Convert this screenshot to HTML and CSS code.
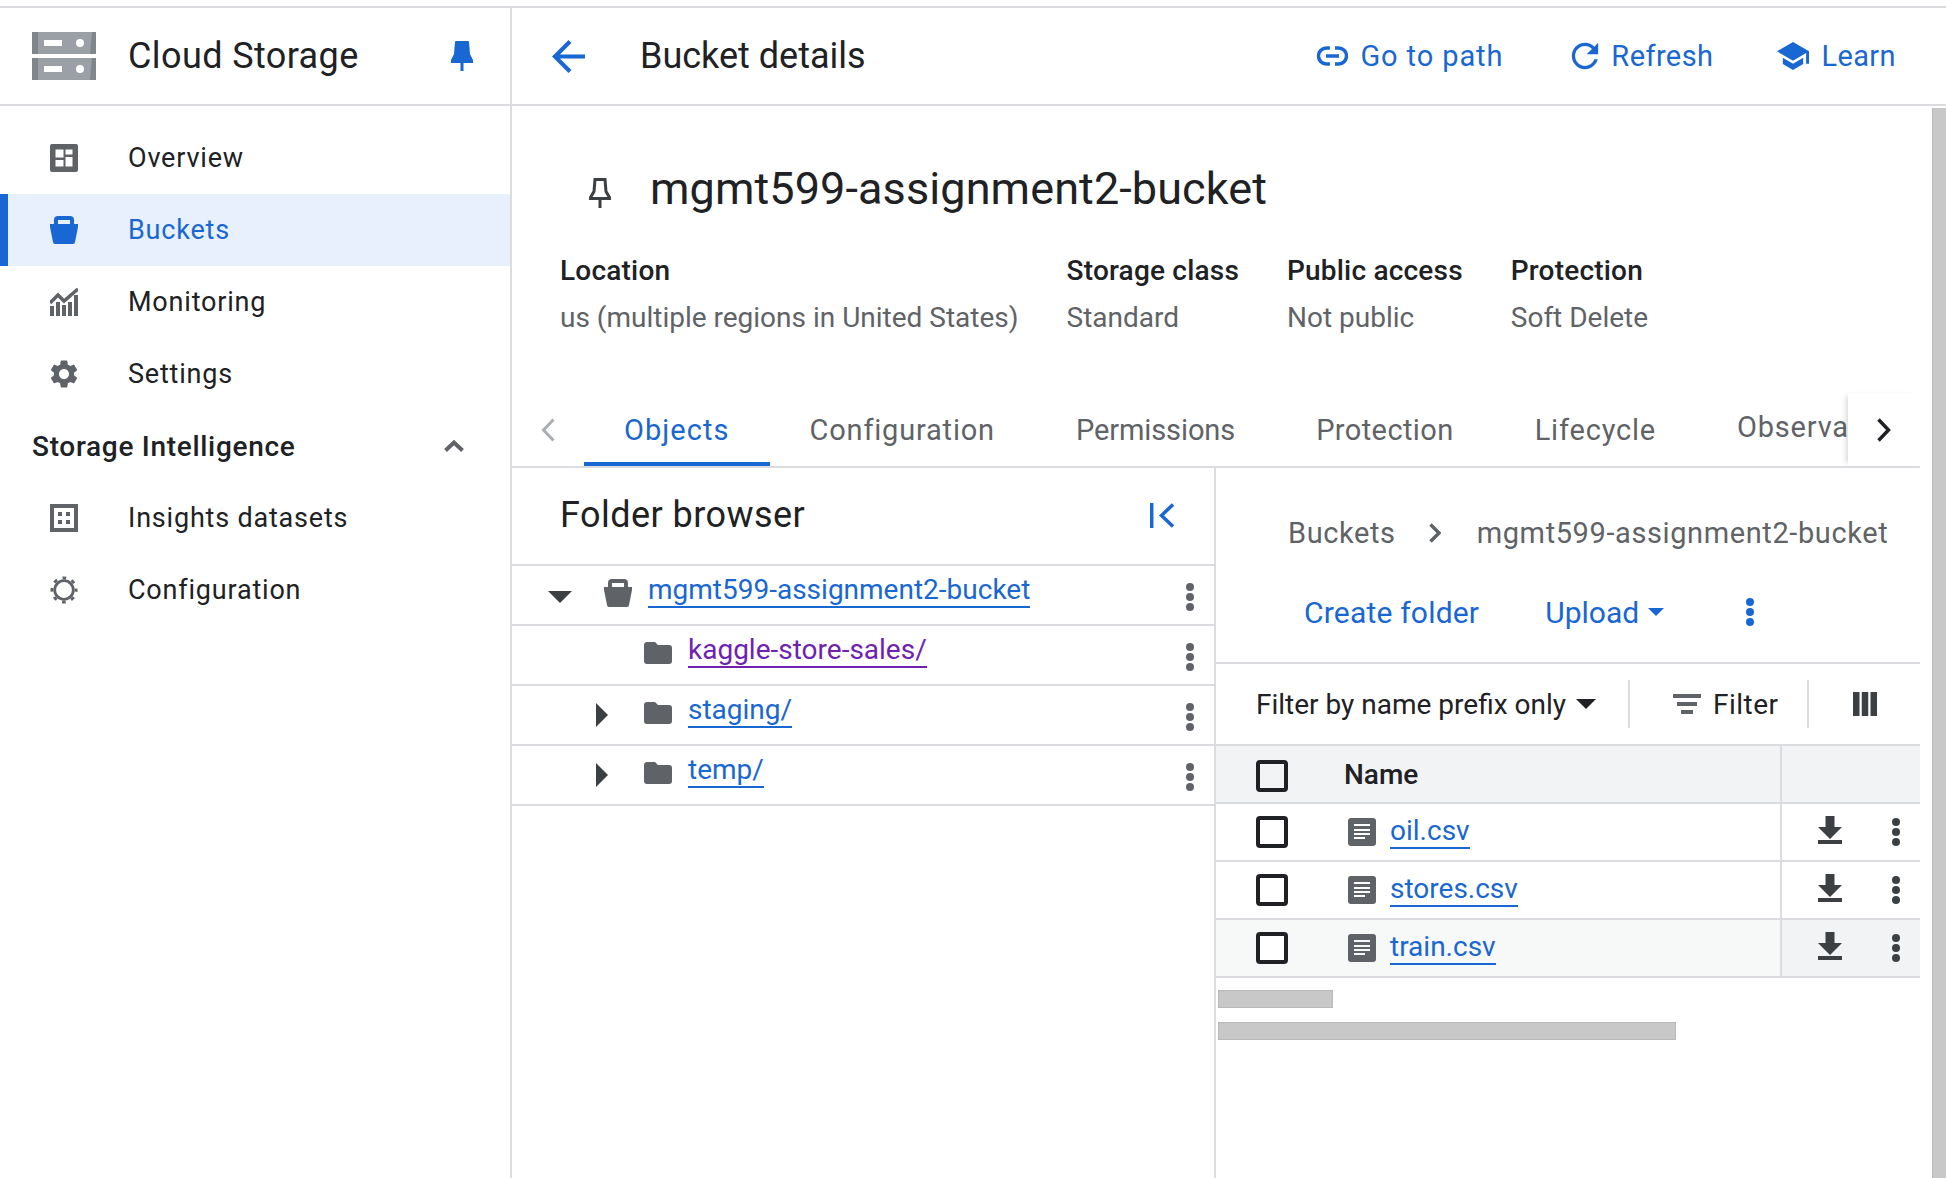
FILE: index.html
```html
<!DOCTYPE html>
<html lang="en">
<head>
    <meta charset="UTF-8">
    <meta name="viewport" content="width=device-width, initial-scale=1.0">
    <title>Bucket details - Cloud Storage</title>
    <link rel="stylesheet" href="styles.css">
</head>
<body>
    <svg class="icon-defs" aria-hidden="true">
        <symbol id="kebab" viewBox="0 0 8 28"><circle cx="4" cy="4" r="4"/><circle cx="4" cy="14" r="4"/><circle cx="4" cy="24" r="4"/></symbol>
        <symbol id="bucket" viewBox="0 0 28 28"><path fill-rule="evenodd" d="M4 8V4a4 4 0 0 1 4-4h12a4 4 0 0 1 4 4v4h4v3l-3 15a2 2 0 0 1-2 2H5a2 2 0 0 1-2-2L0 11V8zM8 4v4h12V4z"/></symbol>
        <symbol id="folder" viewBox="0 0 28 22"><path d="M3 0h8l3 3h11a3 3 0 0 1 3 3v13a3 3 0 0 1-3 3H3a3 3 0 0 1-3-3V3a3 3 0 0 1 3-3z"/></symbol>
        <symbol id="file" viewBox="0 0 28 28"><path fill-rule="evenodd" d="M3 0h22a3 3 0 0 1 3 3v22a3 3 0 0 1-3 3H3a3 3 0 0 1-3-3V3a3 3 0 0 1 3-3zM6 6v2h16V6zM6 11v2h16v-2zM6 15v2h16v-2zM6 19v2h11v-2z"/></symbol>
        <symbol id="download" viewBox="0 0 24 28"><path d="M7.500 0h9v11H24L12 23 0 11h7.500zM0 24h24v4H0z"/></symbol>
        <symbol id="tri-right" viewBox="0 0 12 24"><path d="M0 0l12 12L0 24z"/></symbol>
    </svg>

    <div class="app">
        <aside class="sidebar">
            <header class="side-head">
                <svg class="logo" viewBox="0 0 64 48">
                    <path fill="#9aa0a6" d="M0 0h64v22H0zM0 26h64v22H0z"/>
                    <path fill="#80868b" d="M0 0h6v22H0zM0 26h6v22H0zM64 0v22h-6l2-22zM64 26v22h-6l2-22z"/>
                    <path fill="#fff" d="M12 8h18v6H12zM12 34h18v6H12z"/>
                    <circle fill="#fff" cx="48" cy="11" r="4"/><circle fill="#fff" cx="48" cy="37" r="4"/>
                </svg>
                <span class="side-title">Cloud Storage</span>
                <svg class="side-pin" viewBox="0 0 22 30"><path d="M5 0h12a1 1 0 0 1 1 1l1 12 3 6v3h-9.500v8h-3v-8H0v-3l3-6 1-12a1 1 0 0 1 1-1z"/></svg>
            </header>
            <nav class="side-nav">
                <a class="nav-item">
                    <svg class="nav-icon" viewBox="0 0 28 28"><path fill-rule="evenodd" d="M2 0h24a2 2 0 0 1 2 2v24a2 2 0 0 1-2 2H2a2 2 0 0 1-2-2V2a2 2 0 0 1 2-2zM5.500 5.500v8h8v-8zM5.500 16v6.500h8V16zM15.500 5.500v5h7v-5zM15.500 13v9.500h7V13z"/></svg>
                    Overview
                </a>
                <a class="nav-item active">
                    <svg class="nav-icon"><use href="#bucket"/></svg>
                    Buckets
                </a>
                <a class="nav-item">
                    <svg class="nav-icon" viewBox="0 0 28 28"><path d="M0 18h4v10H0zM6 14h4v14H6zM12 17h4v11h-4zM18 14h4v14h-4zM24 7h4v21h-4z"/><path fill="none" stroke="#5f6368" stroke-width="3.500" d="M0 15l8-8 6 6L28 1"/></svg>
                    Monitoring
                </a>
                <a class="nav-item">
                    <svg class="nav-icon" viewBox="2.600 2 18.800 20"><path d="M19.140 12.940c.04-.3.06-.61.06-.94 0-.32-.02-.64-.07-.94l2.030-1.580a.49.49 0 0 0 .12-.61l-1.920-3.320a.488.488 0 0 0-.59-.22l-2.390.96c-.5-.38-1.030-.7-1.620-.94l-.36-2.540a.484.484 0 0 0-.48-.41h-3.840c-.24 0-.43.17-.47.41l-.36 2.540c-.59.24-1.130.57-1.620.94l-2.390-.96c-.22-.08-.47 0-.59.22L2.740 8.870c-.12.21-.08.47.12.61l2.030 1.580c-.05.3-.09.63-.09.94s.02.64.07.94l-2.030 1.580a.49.49 0 0 0-.12.61l1.920 3.320c.12.22.37.29.59.22l2.390-.96c.5.38 1.030.7 1.620.94l.36 2.540c.05.24.24.41.48.41h3.840c.24 0 .44-.17.47-.41l.36-2.540c.59-.24 1.130-.56 1.620-.94l2.390.96c.22.08.47 0 .59-.22l1.920-3.320c.12-.22.07-.47-.12-.61l-2.010-1.580zM12 15.600c-1.980 0-3.600-1.620-3.600-3.600s1.620-3.600 3.600-3.600 3.600 1.620 3.600 3.600-1.620 3.600-3.600 3.600z"/></svg>
                    Settings
                </a>
                <div class="nav-group">
                    <span>Storage Intelligence</span>
                    <svg class="nav-chevron" viewBox="0 0 20 12"><path fill="none" stroke="#5f6368" stroke-width="4" d="M1.500 10.500L10 2.500l8.500 8"/></svg>
                </div>
                <a class="nav-item">
                    <svg class="nav-icon" viewBox="0 0 28 28"><path fill-rule="evenodd" d="M0 0h28v28H0zM4 4v20h20V4zM8 8h4v4H8zM16 8h4v4h-4zM8 16h4v4H8zM16 16h4v4h-4z"/></svg>
                    Insights datasets
                </a>
                <a class="nav-item">
                    <svg class="nav-icon" viewBox="0 0 30 30"><circle cx="15" cy="15" r="10" fill="none" stroke="#5f6368" stroke-width="3"/><circle cx="15" cy="15" r="13" fill="none" stroke="#5f6368" stroke-width="3" stroke-dasharray="4 6.210" stroke-dashoffset="2"/></svg>
                    Configuration
                </a>
            </nav>
        </aside>

        <main class="main">
            <header class="main-head">
                <svg class="back-arrow" viewBox="4 4 16 16"><path d="M20 11H7.830l5.590-5.590L12 4l-8 8 8 8 1.410-1.410L7.830 13H20v-2z"/></svg>
                <h1 class="main-title">Bucket details</h1>
                <div class="head-actions">
                    <a class="head-action go-path">
                        <svg class="link-icon" viewBox="0 0 31 20"><path fill="none" stroke="#1967d2" stroke-width="3.500" d="M13 2H9.500a8 8 0 0 0 0 16H13M18 2h3.500a8 8 0 0 1 0 16H18M9 10h13"/></svg>
                        Go to path
                    </a>
                    <a class="head-action">
                        <svg class="refresh-icon" viewBox="3.500 3.500 17 17"><path d="M17.650 6.350C16.200 4.900 14.210 4 12 4c-4.420 0-7.990 3.580-7.990 8s3.570 8 7.990 8c3.730 0 6.840-2.550 7.730-6h-2.080c-.82 2.330-3.040 4-5.650 4-3.310 0-6-2.690-6-6s2.690-6 6-6c1.660 0 3.140.69 4.220 1.780L13 11h7V4l-2.350 2.350z"/></svg>
                        Refresh
                    </a>
                    <a class="head-action">
                        <svg class="learn-icon" viewBox="1 3 22 18" preserveAspectRatio="none"><path d="M5 13.180v4L12 21l7-3.820v-4L12 17l-7-3.820zM12 3 1 9l11 6 9-4.910V17h2V9L12 3z"/></svg>
                        Learn
                    </a>
                </div>
            </header>

            <div class="main-body">
                <div class="content">
                    <section class="bucket-head">
                        <div class="bucket-name">
                            <svg class="name-pin" viewBox="0 0 22 30"><path fill="none" stroke="#3c4043" stroke-width="3" d="M6 1.500h10l1 12 3.500 6v1h-19v-1l3.500-6zM11 21v9"/></svg>
                            <h2>mgmt599-assignment2-bucket</h2>
                        </div>
                        <div class="meta">
                            <div class="meta-col"><div class="meta-label">Location</div><div class="meta-value">us (multiple regions in United States)</div></div>
                            <div class="meta-col"><div class="meta-label">Storage class</div><div class="meta-value">Standard</div></div>
                            <div class="meta-col"><div class="meta-label">Public access</div><div class="meta-value">Not public</div></div>
                            <div class="meta-col"><div class="meta-label">Protection</div><div class="meta-value">Soft Delete</div></div>
                        </div>
                    </section>

                    <div class="tabs">
                        <button class="tab-prev"><svg viewBox="0 0 14 24"><path fill="none" stroke="#aaaeb2" stroke-width="3" d="M12.500 1.500L2.500 12l10 10.500"/></svg></button>
                        <div class="tab-list">
                            <a class="tab active">Objects</a>
                            <a class="tab">Configuration</a>
                            <a class="tab tab-tight">Permissions</a>
                            <a class="tab tab-mid">Protection</a>
                            <a class="tab">Lifecycle</a>
                            <a class="tab tab-raised">Observability</a>
                        </div>
                        <button class="tab-next"><svg viewBox="0 0 14 24"><path fill="none" stroke="#202124" stroke-width="3.500" d="M1.500 1.500l10 10.500-10 10.500"/></svg></button>
                    </div>

                    <div class="split">
                        <section class="folders">
                            <div class="folders-head">
                                <h3>Folder browser</h3>
                                <svg class="collapse-icon" viewBox="0 0 24 25"><path fill="none" stroke="#1967d2" stroke-width="3.500" d="M1.700 0v25M23 1.500L11.500 12.500 23 23.500"/></svg>
                            </div>
                            <div class="tree-row root">
                                <svg class="tri-down" viewBox="0 0 24 12"><path d="M0 0h24L12 12z"/></svg>
                                <svg class="tree-bucket"><use href="#bucket"/></svg>
                                <a class="tree-link">mgmt599-assignment2-bucket</a>
                                <svg class="kebab"><use href="#kebab"/></svg>
                            </div>
                            <div class="tree-row">
                                <span class="tri-slot"></span>
                                <svg class="tree-folder"><use href="#folder"/></svg>
                                <a class="tree-link visited">kaggle-store-sales/</a>
                                <svg class="kebab"><use href="#kebab"/></svg>
                            </div>
                            <div class="tree-row">
                                <svg class="tri-slot"><use href="#tri-right"/></svg>
                                <svg class="tree-folder"><use href="#folder"/></svg>
                                <a class="tree-link">staging/</a>
                                <svg class="kebab"><use href="#kebab"/></svg>
                            </div>
                            <div class="tree-row">
                                <svg class="tri-slot"><use href="#tri-right"/></svg>
                                <svg class="tree-folder"><use href="#folder"/></svg>
                                <a class="tree-link">temp/</a>
                                <svg class="kebab"><use href="#kebab"/></svg>
                            </div>
                        </section>

                        <section class="objects">
                            <div class="crumbs">
                                <span>Buckets</span>
                                <svg class="crumb-sep" viewBox="0 0 12 20"><path fill="none" stroke="#5f6368" stroke-width="3.500" d="M1.500 1.500L10 10l-8.500 8.500"/></svg>
                                <span>mgmt599-assignment2-bucket</span>
                            </div>
                            <div class="obj-actions">
                                <a class="obj-action">Create folder</a>
                                <a class="obj-action upload">Upload<svg class="caret-blue" viewBox="0 0 16 8"><path d="M0 0h16L8 8z"/></svg></a>
                                <svg class="kebab-blue"><use href="#kebab"/></svg>
                            </div>
                            <div class="filter-bar">
                                <span class="filter-mode">Filter by name prefix only</span>
                                <svg class="caret-dark" viewBox="0 0 20 10"><path d="M0 0h20L10 10z"/></svg>
                                <span class="bar-sep"></span>
                                <svg class="filter-icon" viewBox="0 0 28 20"><path d="M0 0h28v4H0zM4 8h20v4H4zM8 16h12v4H8z"/></svg>
                                <span class="filter-label">Filter</span>
                                <span class="bar-sep second"></span>
                                <svg class="columns-icon" viewBox="0 0 24 24"><path d="M0 0h6.500v24H0zM8.750 0h6.500v24h-6.500zM17.500 0H24v24h-6.500z"/></svg>
                            </div>

                            <div class="obj-table">
                                <div class="t-row t-head">
                                    <div class="t-main">
                                        <span class="check head-check"></span>
                                        <span class="t-name">Name</span>
                                    </div>
                                    <div class="t-act"></div>
                                </div>
                                <div class="t-row">
                                    <div class="t-main">
                                        <span class="check"></span>
                                        <svg class="file-icon"><use href="#file"/></svg>
                                        <a class="file-link">oil.csv</a>
                                    </div>
                                    <div class="t-act">
                                        <svg class="dl-icon"><use href="#download"/></svg>
                                        <svg class="kebab-dark"><use href="#kebab"/></svg>
                                    </div>
                                </div>
                                <div class="t-row">
                                    <div class="t-main">
                                        <span class="check"></span>
                                        <svg class="file-icon"><use href="#file"/></svg>
                                        <a class="file-link">stores.csv</a>
                                    </div>
                                    <div class="t-act">
                                        <svg class="dl-icon"><use href="#download"/></svg>
                                        <svg class="kebab-dark"><use href="#kebab"/></svg>
                                    </div>
                                </div>
                                <div class="t-row hover">
                                    <div class="t-main">
                                        <span class="check"></span>
                                        <svg class="file-icon"><use href="#file"/></svg>
                                        <a class="file-link">train.csv</a>
                                    </div>
                                    <div class="t-act">
                                        <svg class="dl-icon"><use href="#download"/></svg>
                                        <svg class="kebab-dark"><use href="#kebab"/></svg>
                                    </div>
                                </div>
                            </div>

                            <div class="skeleton short"></div>
                            <div class="skeleton long"></div>
                        </section>
                    </div>
                </div>
                <div class="scrollbar"></div>
            </div>
        </main>
    </div>
</body>
</html>
```

FILE: styles.css
```css
html, body {
    margin: 0;
    height: 100%;
    overflow: hidden;
    background-color: #fff;
}

body {
    font-family: "Roboto", "Liberation Sans", sans-serif;
    color: #202124;
    font-size: 28px;
}

h1, h2, h3 {
    margin: 0;
    font-weight: 400;
}

svg {
    display: block;
    flex: none;
}

.icon-defs {
    display: none;
}

.app {
    display: flex;
    margin-top: 6px;
    height: 1172px;
    border-top: 2px solid #dadce0;
    box-sizing: border-box;
}

/* sidebar */

.sidebar {
    width: 512px;
    flex: none;
    border-right: 2px solid #dadce0;
    box-sizing: border-box;
}

.side-head {
    display: flex;
    align-items: center;
    height: 98px;
    padding-left: 32px;
    padding-right: 37px;
    border-bottom: 2px solid #dadce0;
    box-sizing: border-box;
}

.logo {
    width: 64px;
    height: 48px;
}

.side-title {
    margin-left: 32px;
    font-size: 36px;
    letter-spacing: 0.4px;
}

.side-pin {
    width: 22px;
    height: 30px;
    margin-left: auto;
    fill: #1967d2;
}

.side-nav {
    padding-top: 16px;
}

.nav-item {
    display: flex;
    align-items: center;
    gap: 50px;
    height: 72px;
    padding-left: 50px;
    font-size: 27px;
    letter-spacing: 0.8px;
}

.nav-icon {
    width: 28px;
    height: 28px;
    fill: #5f6368;
}

.nav-item.active {
    padding-left: 42px;
    border-left: 8px solid #1967d2;
    background-color: #e8f0fe;
    color: #1967d2;
}

.nav-item.active .nav-icon {
    fill: #1967d2;
}

.nav-group {
    display: flex;
    align-items: center;
    justify-content: space-between;
    height: 72px;
    padding-left: 32px;
    padding-right: 46px;
    font-weight: 500;
    letter-spacing: 0.7px;
}

.nav-chevron {
    width: 20px;
    height: 12px;
}

/* main */

.main {
    flex: 1;
    min-width: 0;
    display: flex;
    flex-direction: column;
}

.main-head {
    display: flex;
    align-items: center;
    height: 98px;
    flex: none;
    padding-left: 40px;
    padding-right: 50px;
    border-bottom: 2px solid #dadce0;
    box-sizing: border-box;
}

.back-arrow {
    width: 33px;
    height: 33px;
    fill: #1967d2;
}

.main-title {
    margin-left: 55px;
    font-size: 36px;
}

.head-actions {
    display: flex;
    gap: 64px;
    margin-left: auto;
}

.head-action {
    display: flex;
    align-items: center;
    gap: 12px;
    color: #1967d2;
    font-size: 29px;
    letter-spacing: 0.4px;
}

.go-path {
    margin-right: 4px;
    letter-spacing: 0.9px;
}

.link-icon {
    width: 31px;
    height: 20px;
}

.refresh-icon {
    width: 28px;
    height: 28px;
    fill: #1967d2;
}

.learn-icon {
    width: 32px;
    height: 28px;
    fill: #1967d2;
}

.main-body {
    flex: 1;
    display: flex;
    min-height: 0;
}

.content {
    flex: 1;
    min-width: 0;
    padding-right: 12px;
}

.scrollbar {
    width: 14px;
    flex: none;
    margin-top: 2px;
    background-color: #c8c8c8;
    border-left: 1px solid #b8b8b8;
    box-sizing: border-box;
}

/* bucket header */

.bucket-head {
    height: 292px;
    padding-top: 54px;
    box-sizing: border-box;
}

.bucket-name {
    display: flex;
    align-items: center;
    height: 56px;
    padding-left: 77px;
}

.name-pin {
    width: 22px;
    height: 30px;
    margin-top: 10px;
}

.bucket-name h2 {
    margin-left: 39px;
    font-size: 45px;
    letter-spacing: 0.1px;
}

.meta {
    display: flex;
    gap: 48px;
    margin-top: 31px;
    padding-left: 48px;
}

.meta-label {
    font-weight: 500;
    line-height: 47px;
    letter-spacing: 0.2px;
}

.meta-value {
    color: #5f6368;
    line-height: 47px;
}

/* tabs */

.tabs {
    display: flex;
    height: 70px;
    border-bottom: 2px solid #dadce0;
    box-sizing: border-box;
}

.tab-prev, .tab-next {
    flex: none;
    display: flex;
    align-items: center;
    justify-content: center;
    margin: 0;
    padding: 0;
    border: none;
    background: none;
}

.tab-prev {
    width: 72px;
    padding-bottom: 4px;
    box-sizing: border-box;
}

.tab-prev svg, .tab-next svg {
    width: 14px;
    height: 24px;
}

.tab-next {
    width: 72px;
    margin-top: -5px;
    background-color: #fff;
    box-shadow: -5px 0 5px -3px rgba(60, 64, 67, 0.2);
}

.tab-list {
    flex: 1;
    min-width: 0;
    display: flex;
    overflow: hidden;
}

.tab {
    flex: none;
    display: flex;
    align-items: center;
    padding: 0 41px 0 40px;
    color: #5f6368;
    font-size: 29px;
    letter-spacing: 0.8px;
    white-space: nowrap;
    border-bottom: 4px solid transparent;
}

.tab-tight {
    letter-spacing: -0.1px;
}

.tab-mid {
    letter-spacing: 0.4px;
}

.tab.active {
    padding-right: 40px;
    color: #1967d2;
    letter-spacing: 1.05px;
    border-bottom-color: #1967d2;
}

.tab-raised {
    padding-bottom: 6px;
}

/* split */

.split {
    display: flex;
}

.folders {
    width: 704px;
    flex: none;
    height: 710px;
    border-right: 2px solid #dadce0;
    box-sizing: border-box;
}

.folders-head {
    display: flex;
    align-items: center;
    justify-content: space-between;
    height: 98px;
    padding: 0 40px 2px 48px;
    border-bottom: 2px solid #dadce0;
    box-sizing: border-box;
}

.folders-head h3 {
    font-size: 36px;
    letter-spacing: 0.45px;
}

.collapse-icon {
    width: 24px;
    height: 25px;
}

.tree-row {
    display: flex;
    align-items: center;
    height: 60px;
    padding-left: 84px;
    padding-right: 20px;
    border-bottom: 2px solid #dadce0;
    box-sizing: border-box;
}

.tree-row.root {
    padding-left: 36px;
}

.tri-down {
    width: 24px;
    height: 12px;
    margin-top: 4px;
    fill: #3c4043;
}

.tree-bucket {
    width: 28px;
    height: 28px;
    margin-left: 32px;
    margin-bottom: 4px;
    fill: #5f6368;
}

.tri-slot {
    width: 12px;
    height: 24px;
    fill: #3c4043;
}

.tree-folder {
    width: 28px;
    height: 22px;
    margin-left: 36px;
    margin-bottom: 4px;
    fill: #5f6368;
}

.tree-link {
    margin-left: 16px;
    margin-bottom: 8px;
    line-height: 32px;
    color: #1967d2;
    border-bottom: 2px solid #1967d2;
}

.tree-link.visited {
    color: #6f22b0;
    border-bottom-color: #6f22b0;
}

.kebab {
    width: 8px;
    height: 28px;
    margin-left: auto;
    margin-top: 4px;
    fill: #5f6368;
}

/* objects pane */

.objects {
    flex: 1;
    min-width: 0;
}

.crumbs {
    display: flex;
    align-items: center;
    height: 48px;
    margin-top: 41px;
    padding-left: 72px;
    color: #5f6368;
    font-size: 29px;
    letter-spacing: 0.6px;
}

.crumb-sep {
    width: 12px;
    height: 20px;
    margin: 0 36px 0 33px;
}

.obj-actions {
    display: flex;
    align-items: center;
    height: 48px;
    margin-top: 31px;
    padding-left: 88px;
    color: #1967d2;
    font-size: 30px;
}

.obj-action {
    letter-spacing: 0.2px;
}

.obj-action.upload {
    display: flex;
    align-items: center;
    margin-left: 66px;
    letter-spacing: 0;
}

.caret-blue {
    width: 16px;
    height: 8px;
    margin-left: 9px;
    fill: #1967d2;
}

.kebab-blue {
    width: 8px;
    height: 32px;
    margin-left: 82px;
    fill: #1967d2;
}

.filter-bar {
    display: flex;
    align-items: center;
    height: 84px;
    margin-top: 26px;
    padding-left: 40px;
    border-top: 2px solid #dadce0;
    border-bottom: 2px solid #dadce0;
    box-sizing: border-box;
}

.caret-dark {
    width: 20px;
    height: 10px;
    margin-left: 10px;
    fill: #202124;
}

.bar-sep {
    width: 2px;
    height: 48px;
    margin-left: 32px;
    background-color: #dadce0;
}

.bar-sep.second {
    margin-left: 28px;
}

.filter-icon {
    width: 28px;
    height: 20px;
    margin-left: 43px;
    fill: #5f6368;
}

.filter-label {
    margin-left: 12px;
    letter-spacing: 0.5px;
}

.columns-icon {
    width: 24px;
    height: 24px;
    margin-left: 44px;
    fill: #3c4043;
}

/* table */

.t-row {
    display: flex;
    height: 58px;
    border-bottom: 2px solid #dadce0;
    box-sizing: border-box;
}

.t-main {
    flex: 1;
    display: flex;
    align-items: center;
    padding-left: 40px;
}

.t-act {
    width: 140px;
    flex: none;
    display: flex;
    align-items: center;
    padding-left: 36px;
    border-left: 2px solid #dadce0;
    box-sizing: border-box;
}

.t-head, .hover .t-act {
    background-color: #f1f3f4;
}

.hover .t-main {
    background-color: #f7f8f8;
}

.check {
    width: 32px;
    height: 32px;
    border: 4px solid #202124;
    border-radius: 4px;
    box-sizing: border-box;
    background-color: #fff;
}

.head-check {
    margin-top: 4px;
    background: none;
}

.t-name {
    margin-left: 56px;
    font-weight: 500;
}

.file-icon {
    width: 28px;
    height: 28px;
    margin-left: 60px;
    fill: #5f6368;
}

.file-link {
    margin-left: 14px;
    line-height: 32px;
    color: #1967d2;
    border-bottom: 2px solid #1967d2;
}

.dl-icon {
    width: 24px;
    height: 28px;
    margin-bottom: 4px;
    fill: #3c4043;
}

.kebab-dark {
    width: 8px;
    height: 28px;
    margin-left: 50px;
    fill: #3c4043;
}

.skeleton {
    height: 18px;
    margin-left: 2px;
    background-color: #c8c8c8;
    border: 1px solid #b8b8b8;
    box-sizing: border-box;
}

.skeleton.short {
    width: 115px;
    margin-top: 12px;
}

.skeleton.long {
    width: 458px;
    margin-top: 14px;
}
```
